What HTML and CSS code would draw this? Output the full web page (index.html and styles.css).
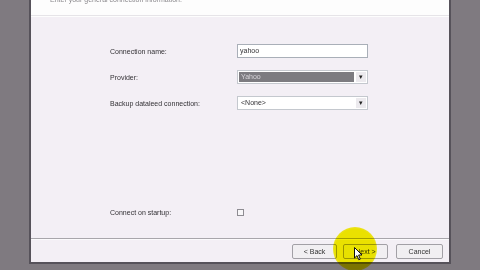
FILE: index.html
```
<!DOCTYPE html>
<html lang="en">
<head>
  <meta charset="UTF-8">
  <title>New Connection Wizard</title>
  <link rel="stylesheet" href="styles.css">
</head>
<body>

  <div class="dialog">
    <!-- header with the cut-off subtitle -->
    <div class="header">
      <p class="subtitle">Enter your general connection information.</p>
    </div>
    <div class="header-rule"></div>

    <div class="content">
      <div class="row">
        <span class="label">Connection name:</span>
        <div class="field">yahoo</div>
      </div>
      <div class="row">
        <span class="label">Provider:</span>
        <div class="select">
          <span class="value selected">Yahoo</span>
          <span class="arrow">&#9662;</span>
        </div>
      </div>
      <div class="row">
        <span class="label">Backup dataleed connection:</span>
        <div class="select">
          <span class="value">&lt;None&gt;</span>
          <span class="arrow">&#9662;</span>
        </div>
      </div>
      <div class="row startup">
        <span class="label">Connect on startup:</span>
        <span class="checkbox"></span>
      </div>
    </div>

    <div class="footer">
      <button class="btn back">&lt; Back</button>
      <div class="next-wrap">
        <button class="btn next">Next &gt;</button>
        <span class="highlight"></span>
        <svg class="cursor" width="9" height="14" viewBox="0 0 9 14">
          <path d="M0.5 0.5 L0.5 11 L3 8.6 L4.8 12.8 L6.3 12.1 L4.6 8 L8 8 Z" fill="#fff" stroke="#111" stroke-width="1"/>
        </svg>
      </div>
      <button class="btn cancel">Cancel</button>
    </div>
  </div>

</body>
</html>
```

FILE: styles.css
```
* {
  margin: 0;
  padding: 0;
  box-sizing: border-box;
}

body {
  background-color: #7f7a80;
  font-family: "Liberation Sans", Arial, sans-serif;
  font-size: 7px;
  color: #333135;
  width: 480px;
  height: 270px;
  overflow: hidden;
}

.dialog {
  margin-left: 29px;
  width: 422px;
  height: 264px;
  border: 2px solid #56525a;
  border-top: none;
  background: #f3eff5;
  display: flex;
  flex-direction: column;
}

.header {
  height: 15px;
  background: #fdfdfd;
  overflow: hidden;
}

.subtitle {
  margin: -4px 0 0 19px;
  color: #8a888c;
  font-size: 7px;
}

.header-rule {
  height: 2px;
  background: #fdfdfd;
  border-top: 1px solid #e6e4e8;
  box-shadow: inset 9px 0 0 #fdfdfd, inset -9px 0 0 #fdfdfd;
}

.content {
  flex: 1;
  padding: 27px 0 0 79px;
  display: flex;
  flex-direction: column;
  gap: 12px;
}

.row {
  display: grid;
  grid-template-columns: 127px 131px;
  align-items: center;
  height: 14px;
}

.row.startup {
  margin-top: 83px;
}

.field {
  height: 14px;
  background: #fff;
  border: 1px solid #a9afb8;
  padding: 2px 2px;
  line-height: 8px;
}

.select {
  height: 14px;
  background: #fff;
  border: 1px solid #c4c8ce;
  display: flex;
  align-items: center;
  padding: 1px;
}

.select .value {
  flex: 1;
  height: 10px;
  line-height: 10px;
  padding-left: 2px;
}

.select .value.selected {
  background: #7c7b80;
  color: #d8d6da;
}

.select .arrow {
  width: 10px;
  margin-left: 2px;
  height: 10px;
  line-height: 10px;
  text-align: center;
  font-size: 7px;
  color: #222;
  background: #eceaee;
}

.checkbox {
  width: 7px;
  height: 7px;
  border: 1px solid #8e8c92;
  background: #f7f6f8;
}

.footer {
  height: 24px;
  border-top: 1px solid #a8a6ab;
  box-shadow: inset 0 1px 0 #fbfafc;
  display: flex;
  align-items: center;
  justify-content: flex-end;
  padding: 1px 6px 0 0;
}

.btn {
  height: 15px;
  font-family: "Liberation Sans", Arial, sans-serif;
  font-size: 7px;
  color: #333;
  background: #f1eff2;
  border: 1px solid #a2a0a6;
  border-radius: 2px;
}

.back {
  width: 45px;
}

.next-wrap {
  position: relative;
  margin-left: 6px;
}

.next {
  width: 45px;
  display: block;
}

.cancel {
  width: 47px;
  margin-left: 8px;
}

.highlight {
  position: absolute;
  left: -10px;
  top: -17px;
  width: 44px;
  height: 44px;
  border-radius: 50%;
  mix-blend-mode: multiply;
  background: radial-gradient(circle, #f6f000 0%, #f6f000 64%, rgba(246, 240, 0, 0.5) 86%, rgba(246, 240, 0, 0) 100%);
}

.cursor {
  position: absolute;
  left: 11px;
  top: 3px;
}
```
